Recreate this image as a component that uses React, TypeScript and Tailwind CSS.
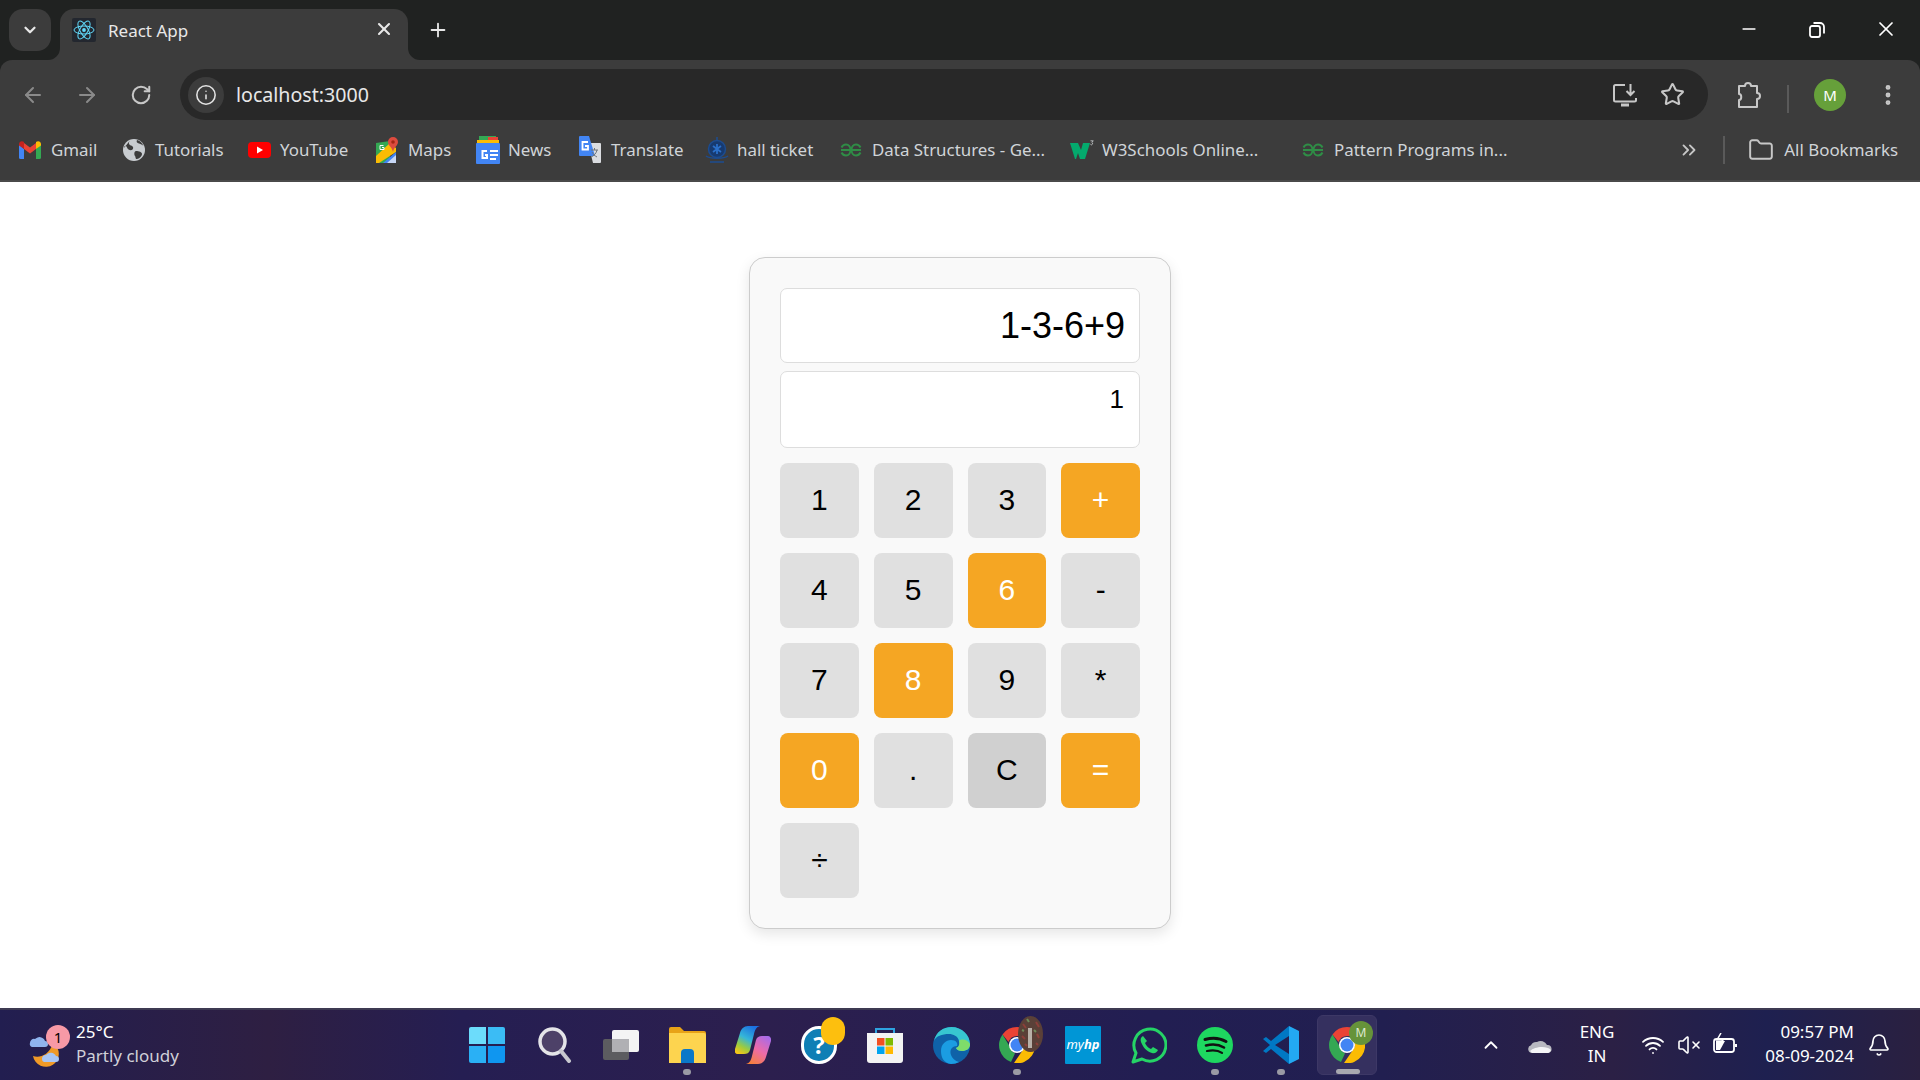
import { ArrowLeft, ArrowRight, ChevronDown, ChevronUp, ChevronsRight, Bell, EllipsisVertical, Folder, Info, Minus, Plus, RotateCw, Star, VolumeX, Wifi, X } from 'lucide-react';

const uiFont = "[font-family:'Noto_Sans',sans-serif]";

const GfgIcon = () => (
  <svg width="22" height="14" viewBox="0 0 22 14" fill="none" stroke="#2f8d46" strokeWidth="2">
    <path d="M1 7h9.500M1.500 4.500C2.500 2.500 4 1.500 6 1.500c2.800 0 4.500 2.500 4.500 5.500s-1.800 5.500-4.500 5.500c-2 0-3.500-1-4.500-3" />
    <path d="M21 7h-9.500M20.500 4.500C19.500 2.500 18 1.500 16 1.500c-2.800 0-4.500 2.500-4.500 5.500s1.800 5.500 4.500 5.500c2 0 3.500-1 4.500-3" />
  </svg>
);

const ChromeLogo = () => (
  <svg width="36" height="36" viewBox="0 0 36 36">
    <path d="M18 0a18 18 0 0 1 15.600 9H18a9 9 0 0 0-8.500 6L3.500 7.400A18 18 0 0 1 18 0z" fill="#ea4335" />
    <path d="M3.500 7.400 11 20a9 9 0 0 0 5 6.500L12 35A18 18 0 0 1 3.500 7.400z" fill="#34a853" />
    <path d="M33.600 9A18 18 0 0 1 15 36l8.500-12.500A9 9 0 0 0 24 12z" fill="#fbbc04" />
    <circle cx="18" cy="18" r="8" fill="#fff" />
    <circle cx="18" cy="18" r="6.500" fill="#4285f4" />
  </svg>
);

const bookmarks = [
  {
    label: 'Gmail',
    width: 'w-[104px]',
    icon: (
      <svg width="22" height="18" viewBox="0 0 22 18">
        <path d="M0 3v13.500A1.500 1.500 0 0 0 1.500 18H5V8z" fill="#4285f4" />
        <path d="M22 3v13.500a1.500 1.500 0 0 1-1.500 1.500H17V8z" fill="#34a853" />
        <path d="M5 8 11 12.500 17 8V2l-6 4.500L5 2z" fill="#ea4335" />
        <path d="M0 3c0-2.500 3-3.800 5-2v7L0 4.500z" fill="#c5221f" />
        <path d="M22 3c0-2.500-3-3.800-5-2v7l5-3.500z" fill="#fbbc04" />
      </svg>
    ),
  },
  {
    label: 'Tutorials',
    width: 'w-[125px]',
    icon: (
      <svg width="22" height="22" viewBox="0 0 22 22">
        <circle cx="11" cy="11" r="11" fill="#c8ccd0" />
        <path d="M7 1.500C5 4 6 6 8 6.500s3 2.500 1.500 4S5 11 4 8.500 1.500 6 1 9M13 12c3 0 6 1 6 3s-3 5-5 5-1-2-2-3-1-5 1-5zM14 1c-1 2 0 3 2 3.500s3 1 4.500 2.500C19 3.500 17 1.500 14 1z" fill="#3c3c3c" />
      </svg>
    ),
  },
  {
    label: 'YouTube',
    width: 'w-[128px]',
    icon: (
      <svg width="23" height="16" viewBox="0 0 23 16">
        <rect width="23" height="16" rx="4" fill="#ff0000" />
        <path d="M9 4.500v7l6-3.500z" fill="#fff" />
      </svg>
    ),
  },
  {
    label: 'Maps',
    width: 'w-[100px]',
    icon: (
      <svg width="22" height="26" viewBox="0 0 22 26">
        <path d="M0 6l14-2v22H0z" fill="#34a853" />
        <path d="M0 19 14 6l6 5v4L3 26H0z" fill="#fbbc04" />
        <path d="M7 26l13-11v11z" fill="#4285f4" />
        <path d="M11 26l9-8v8z" fill="#c7d7f5" />
        <path d="M17 0a5 5 0 0 1 5 5c0 3.500-4 5-5 10-1-5-5-6.500-5-10a5 5 0 0 1 5-5z" fill="#dd4b3e" />
        <circle cx="17" cy="5" r="1.800" fill="#a52714" />
        <path d="M7.500 8.500H4v4h4V10.500H6" fill="none" stroke="#fff" strokeWidth="1" />
      </svg>
    ),
  },
  {
    label: 'News',
    width: 'w-[103px]',
    icon: (
      <svg width="24" height="28" viewBox="0 0 24 28">
        <path d="M3 0h17v8H3z" fill="#34a853" />
        <path d="M12 1h10v8H12z" fill="#ea4335" />
        <path d="M1 4h22v6H1z" fill="#fbbc04" />
        <rect y="7" width="24" height="21" rx="1" fill="#4285f4" />
        <rect x="14" y="14" width="8" height="2" fill="#fff" />
        <rect x="14" y="18" width="8" height="2" fill="#fff" />
        <rect x="14" y="22" width="6" height="2" fill="#fff" />
        <path d="M11 15H6.500v7H11v-3H9" fill="none" stroke="#fff" strokeWidth="2" />
      </svg>
    ),
  },
  {
    label: 'Translate',
    width: 'w-[126px]',
    icon: (
      <svg width="22" height="28" viewBox="0 0 22 28">
        <path d="M9 7h12a1 1 0 0 1 1 1v18a1 1 0 0 1-1 1h-7z" fill="#dadce0" />
        <path d="M1 0h9l6 20H1a1 1 0 0 1-1-1V1a1 1 0 0 1 1-1z" fill="#4285f4" />
        <path d="M9 6H3.500v7.500H9V10H6" fill="none" stroke="#fff" strokeWidth="1.800" />
        <path d="M12 14h7M15.500 12v2M18 14c-.5 3-3 6-6 7M13 16c1 2 3 4 5 5" fill="none" stroke="#70757a" strokeWidth="1" />
      </svg>
    ),
  },
  {
    label: 'hall ticket',
    width: 'w-[135px]',
    icon: (
      <svg width="24" height="28" viewBox="0 0 24 28" fill="none">
        <circle cx="12" cy="13" r="8.500" stroke="#1c4c90" strokeWidth="1.500" fill="#173a70" />
        <path d="M12 1v4M1 20c4 3 18 3 22 0M5 26h14" stroke="#1c4c90" strokeWidth="1.500" />
        <path d="M8 10l8 6M16 10l-8 6M12 8v10" stroke="#2a6fc9" strokeWidth="1.800" />
      </svg>
    ),
  },
  { label: 'Data Structures - Ge...', width: 'w-[230px]', icon: <GfgIcon /> },
  {
    label: 'W3Schools Online...',
    width: 'w-[232px]',
    icon: (
      <svg width="24" height="20" viewBox="0 0 24 20">
        <path d="M0 3h8l3 7 2-7h7l-5 16h-5l-2-6-2 6H5z" fill="#04aa6d" />
        <path d="M20.500 .8h2.800l-1.500 1.600a1.200 1.200 0 1 1-1.400 1.800" fill="none" stroke="#cfd3d6" strokeWidth=".8" />
      </svg>
    ),
  },
];

const calcButtons = [
  { label: '1', kind: 'num' },
  { label: '2', kind: 'num' },
  { label: '3', kind: 'num' },
  { label: '+', kind: 'hot' },
  { label: '4', kind: 'num' },
  { label: '5', kind: 'num' },
  { label: '6', kind: 'hot' },
  { label: '-', kind: 'num' },
  { label: '7', kind: 'num' },
  { label: '8', kind: 'hot' },
  { label: '9', kind: 'num' },
  { label: '*', kind: 'num' },
  { label: '0', kind: 'hot' },
  { label: '.', kind: 'num' },
  { label: 'C', kind: 'clear' },
  { label: '=', kind: 'hot' },
  { label: '÷', kind: 'num' },
];

const kindClass: Record<string, string> = {
  num: 'bg-[#e0e0e0] text-black',
  hot: 'bg-[#f5a623] text-white',
  clear: 'bg-[#d0d0d0] text-black',
};

const TitleBar = () => (
  <div className="flex h-[60px] shrink-0 bg-[#202221] text-white">
    <div className="ml-[9px] mt-[9px] flex h-[42px] w-[42px] items-center justify-center rounded-[14px] bg-[#3c3c3c]">
      <ChevronDown size={18} strokeWidth={3} className="text-[#e8e8e8]" />
    </div>
    <div className="relative ml-[9px] mt-[9px] flex h-[51px] w-[348px] items-start rounded-t-[14px] bg-[#3c3c3c] pl-[12px] pt-[9px]">
      <svg className="absolute -left-[12px] bottom-0" width="12" height="12" viewBox="0 0 12 12">
        <path d="M12 0v12H0A12 12 0 0 0 12 0z" fill="#3c3c3c" />
      </svg>
      <svg className="absolute -right-[12px] bottom-0" width="12" height="12" viewBox="0 0 12 12">
        <path d="M0 0v12h12A12 12 0 0 1 0 0z" fill="#3c3c3c" />
      </svg>
      <div className="flex h-[24px] w-[24px] items-center justify-center rounded-[2px] bg-[#23272f]">
        <svg width="22" height="20" viewBox="-11 -10 22 20" fill="none" stroke="#61dafb" strokeWidth="1">
          <circle r="1.900" fill="#61dafb" stroke="none" />
          <ellipse rx="10" ry="4" />
          <ellipse rx="10" ry="4" transform="rotate(60)" />
          <ellipse rx="10" ry="4" transform="rotate(120)" />
        </svg>
      </div>
      <span className={`${uiFont} ml-[12px] mt-[1px] flex-1 text-[17px] leading-[24px] text-[#e8e8e8]`}>React App</span>
      <X size={20} strokeWidth={2.5} className="mr-[14px] mt-[1px] text-[#e8e8e8]" />
    </div>
    <Plus size={22} strokeWidth={2} className="ml-[19px] mt-[19px] text-[#e8e8e8]" />
    <div className="ml-auto flex items-start">
      <Minus size={20} strokeWidth={2} className="mr-[49px] mt-[19px] text-white" />
      <svg className="mr-[48px] mt-[21px]" width="18" height="18" viewBox="0 0 18 18" fill="none" stroke="#fff" strokeWidth="1.800">
        <rect x="2" y="5" width="10" height="11" rx="2" />
        <path d="M5.500 2H12a4 4 0 0 1 4 4v6.500" />
      </svg>
      <X size={24} strokeWidth={1.7} className="mr-[22px] mt-[17px] text-white" />
    </div>
  </div>
);

const Toolbar = () => (
  <div className="flex h-[60px] shrink-0 items-start rounded-t-[12px] bg-[#3c3c3c]">
    <ArrowLeft size={24} className="ml-[21px] mt-[23px] text-[#8a8a8a]" />
    <ArrowRight size={24} className="ml-[30px] mt-[23px] text-[#8a8a8a]" />
    <RotateCw size={22} strokeWidth={2.2} className="ml-[31px] mt-[24px] text-[#c7c7c7]" />
    <div className="ml-[28px] mt-[9px] flex h-[51px] w-[1528px] items-center rounded-full bg-[#282828] pl-[8px]">
      <div className="flex h-[36px] w-[36px] items-center justify-center rounded-full bg-[#3c3c3c]">
        <Info size={22} strokeWidth={1.7} className="text-[#e3e3e3]" />
      </div>
      <span className={`${uiFont} ml-[12px] flex-1 text-[19.6px] text-[#e8e8e8]`}>localhost:3000</span>
      <svg className="mr-[22px]" width="26" height="26" viewBox="0 0 26 26" fill="none" stroke="#c7c7c7" strokeWidth="2">
        <path d="M13 3H3.500a1.500 1.500 0 0 0-1.500 1.500V18a1.500 1.500 0 0 0 1.500 1.500h19A1.500 1.500 0 0 0 24 18v-2" />
        <path d="M18.500 2v11M14.500 9l4 4 4-4" />
        <path d="M9 23h8" strokeWidth="3" />
      </svg>
      <Star size={25} strokeWidth={2} className="mr-[23px] text-[#c7c7c7]" />
    </div>
    <svg className="ml-[28px] mt-[21px]" width="26" height="28" viewBox="0 0 26 28" fill="none" stroke="#c7c7c7" strokeWidth="2">
      <path d="M3 5h6c0-4 6-4 6 0h6v7c4 0 4 6 0 6v8H3v-7c3 0 3-6 0-6z" strokeLinejoin="round" />
    </svg>
    <div className="ml-[25px] mt-[25px] h-[28px] w-[2px] bg-[#5a5a5a]" />
    <div className={`${uiFont} ml-[25px] mt-[19px] flex h-[32px] w-[32px] items-center justify-center rounded-full bg-[#66a03a] text-[15px] text-white`}>M</div>
    <EllipsisVertical size={26} strokeWidth={2.5} className="ml-[29px] mt-[22px] text-[#c7c7c7]" />
  </div>
);

const BookmarksBar = () => (
  <div className={`${uiFont} flex h-[62px] shrink-0 items-center border-b-2 border-[#4a4a4a] bg-[#3c3c3c] pl-[19px] text-[16.9px] text-[#d0d4d8]`}>
    {bookmarks.map((b) => (
      <div key={b.label} className={`flex ${b.width} shrink-0 items-center`}>
        <span className="flex w-[32px] shrink-0 items-center">{b.icon}</span>
        <span className="whitespace-nowrap">{b.label}</span>
      </div>
    ))}
    <div className="flex shrink-0 items-center">
      <span className="flex w-[32px] shrink-0 items-center">
        <GfgIcon />
      </span>
      <span className="whitespace-nowrap">Pattern Programs in...</span>
    </div>
    <ChevronsRight size={22} strokeWidth={2} className="ml-auto text-[#c7c7c7]" />
    <div className="ml-[23px] h-[28px] w-[2px] bg-[#5a5a5a]" />
    <Folder size={26} strokeWidth={1.8} className="ml-[23px] text-[#c7c7c7]" />
    <span className="ml-[10px] mr-[22px] whitespace-nowrap">All Bookmarks</span>
  </div>
);

const Calculator = () => (
  <div className="w-[422px] rounded-[16px] border border-[#cccccc] bg-[#f9f9f9] p-[30px] shadow-[0_5px_14px_rgba(0,0,0,0.1)] [font-family:'Liberation_Sans',Arial,sans-serif]">
    <div className="flex h-[75px] items-center justify-end rounded-[7px] border border-[#dddddd] bg-white pr-[14px] text-[36px] text-black">
      1-3-6+9
    </div>
    <div className="mt-[8px] flex h-[77px] items-start justify-end rounded-[7px] border border-[#dddddd] bg-white pr-[15px] pt-[8px] text-[26px] text-black">
      1
    </div>
    <div className="mt-[15px] grid grid-cols-4 gap-[15px]">
      {calcButtons.map((b) => (
        <button key={b.label} className={`flex h-[75px] items-center justify-center rounded-[8px] pb-[2px] text-[30px] ${kindClass[b.kind]}`}>
          {b.label}
        </button>
      ))}
    </div>
  </div>
);

const taskIcons = [
  {
    id: 'files',
    dot: true,
    icon: (
      <svg width="37" height="36" viewBox="0 0 37 36">
        <path d="M0 2a2 2 0 0 1 2-2h9l4 4h20a2 2 0 0 1 2 2v4H0z" fill="#e8a317" />
        <path d="M0 6h35a2 2 0 0 1 2 2v28H0z" fill="#fdd44f" />
        <path d="M12 26a4 4 0 0 1 4-4h5a4 4 0 0 1 4 4v10H12z" fill="#0a78c8" />
      </svg>
    ),
  },
  {
    id: 'copilot',
    icon: (
      <svg width="36" height="38" viewBox="0 0 36 38">
        <defs>
          <linearGradient id="cpa" x1="0.7" y1="0" x2="0.2" y2="1">
            <stop offset="0" stopColor="#1b6fe2" />
            <stop offset=".45" stopColor="#35b6d8" />
            <stop offset=".75" stopColor="#9ccb3f" />
            <stop offset="1" stopColor="#f5c518" />
          </linearGradient>
          <linearGradient id="cpb" x1="0.8" y1="0" x2="0.2" y2="1">
            <stop offset="0" stopColor="#a86be8" />
            <stop offset=".5" stopColor="#ee6ba8" />
            <stop offset="1" stopColor="#f5803a" />
          </linearGradient>
        </defs>
        <path d="M13 0h12c-4 1-5 4-6 8l-4 16c-1 3-3 4-6 4H3c-3 0-3.500-2-3-5L5 7c1-4 4-7 8-7z" fill="url(#cpa)" />
        <path d="M23 38H11c4-1 5-4 6-8l4-16c1-3 3-4 6-4h6c2 0 3.500 2 3 5l-5 16c-1 4-4 7-8 7z" fill="url(#cpb)" />
      </svg>
    ),
  },
  {
    id: 'help',
    icon: (
      <div className="relative h-[38px] w-[36px]">
        <div className="flex h-[38px] w-[36px] items-center justify-center rounded-full border-[3px] border-white bg-[#0f7fb5] text-[24px] font-bold text-white">?</div>
        <div className="absolute -right-[8px] -top-[9px] h-[28px] w-[24px] rounded-full bg-[#fdbf0e]" />
      </div>
    ),
  },
  {
    id: 'store',
    icon: (
      <svg width="36" height="36" viewBox="0 0 36 36">
        <path d="M9 6V2h18v4" fill="none" stroke="#2ea3e0" strokeWidth="2" />
        <path d="M0 6h36v27a3 3 0 0 1-3 3H3a3 3 0 0 1-3-3z" fill="#f3f3f3" />
        <rect x="10" y="11" width="7.500" height="7.500" fill="#f25022" />
        <rect x="18.500" y="11" width="7.500" height="7.500" fill="#7fba00" />
        <rect x="10" y="19.500" width="7.500" height="7.500" fill="#00a4ef" />
        <rect x="18.500" y="19.500" width="7.500" height="7.500" fill="#ffb900" />
      </svg>
    ),
  },
  {
    id: 'edge',
    icon: (
      <svg width="37" height="37" viewBox="0 0 37 37">
        <circle cx="18.500" cy="18.500" r="18.500" fill="#0f62a8" />
        <path d="M1 14C3 5 10 0 18.500 0 29 0 37 8 37 17c0 5-4 7-8 7-3 0-5-1-6-3 3-1 4-4 3-7-1-5-6-7-10-7C9 7 3 9 1 14z" fill="#37c6d0" />
        <path d="M37 17c0 5-4 7-8 7-3 0-5-1-6-3 3-1 4-4 3-7 3-3 9-1 11 3z" fill="#7fdc6a" />
        <path d="M8 24c0-7 5-11 10-11s7 3 6 6c-4 0-8 3-6 9 1 3 4 6 8 7-2 1-5 2-8 2C11 36 8 31 8 24z" fill="#1b9de2" />
      </svg>
    ),
  },
  {
    id: 'chrome',
    dot: true,
    icon: (
      <div className="relative h-[36px] w-[36px]">
        <ChromeLogo />
        <svg className="absolute -right-[8px] -top-[11px]" width="25" height="36" viewBox="0 0 25 36">
          <ellipse cx="12.500" cy="18" rx="12.500" ry="18" fill="#5a4038" />
          <path d="M12 12v20" stroke="#b8b0a8" strokeWidth="4" />
          <path d="M5 8l3 4M18 6l3 5M4 20l3 3M19 18l2 4M7 28l2 2M18 27l2 2" stroke="#8c3f3a" strokeWidth="2" />
          <path d="M9 3l2 3M16 14l2 2M4 14l2 1" stroke="#6f8a5a" strokeWidth="2" />
        </svg>
      </div>
    ),
  },
  {
    id: 'myhp',
    icon: (
      <div className={`${uiFont} flex h-[38px] w-[36px] items-center justify-center rounded-[1px] bg-[#0096d6] text-[13px] italic text-white`}>
        my<span className="font-bold">hp</span>
      </div>
    ),
  },
  {
    id: 'whatsapp',
    icon: (
      <svg width="36" height="38" viewBox="0 0 36 38" fill="none">
        <path d="M2 36l3-9a16 16 0 1 1 6 6z" stroke="#25d366" strokeWidth="3" strokeLinejoin="round" />
        <path d="M12 10c-2 1-3 3-2 6 2 5 5 9 11 11 3 1 5-1 6-3l-5-3-2 2c-3-1-5-4-6-6l2-2z" fill="#25d366" />
      </svg>
    ),
  },
  {
    id: 'spotify',
    dot: true,
    icon: (
      <svg width="36" height="36" viewBox="0 0 36 36" fill="none">
        <circle cx="18" cy="18" r="18" fill="#1ed760" />
        <path d="M8 12.500c7-2 15-1.500 21 2" stroke="#111" strokeWidth="3" strokeLinecap="round" />
        <path d="M9 18.500c6-1.500 13-1 18 2" stroke="#111" strokeWidth="2.600" strokeLinecap="round" />
        <path d="M10 24c5-1 11-.8 15 1.800" stroke="#111" strokeWidth="2.200" strokeLinecap="round" />
      </svg>
    ),
  },
  {
    id: 'vscode',
    dot: true,
    icon: (
      <svg width="36" height="38" viewBox="0 0 36 38">
        <path d="M26 0 36 5v28l-10 5z" fill="#23a9f2" />
        <path d="M26 0v10L12 19l14 9v10L8 23l-5 4-3-2 7-6-7-6 3-2 5 4z" fill="#0078c4" />
      </svg>
    ),
  },
];

const Taskbar = () => (
  <div className={`${uiFont} flex h-[72px] shrink-0 items-center border-t-2 border-[#3e3a52] bg-[linear-gradient(90deg,#221e50_0%,#2e1f42_14%,#251e52_24%,#2c1f4e_40%,#221e52_60%,#211f50_72%,#2b2045_84%,#1e2050_92%,#2a2040_100%)] text-white`}>
    {/* Weather */}
    <div className="flex w-[454px] shrink-0 items-center pl-[29px]">
      <div className="relative h-[40px] w-[47px] shrink-0">
        <svg className="absolute left-0 top-[8px]" width="38" height="34" viewBox="0 0 38 34">
          <path d="M24 10a13 13 0 1 1-20 13c6 2 16 0 20-13z" fill="#f09a28" />
          <path d="M1 10a4 4 0 0 1 5-4 6 6 0 0 1 10 2 3 3 0 0 1 0 6H3a3 3 0 0 1-2-4z" fill="#8fb4ee" />
          <path d="M13 26a4 4 0 0 1 4-4 6 6 0 0 1 10 1 3 3 0 0 1 0 6H15a3 3 0 0 1-2-3z" fill="#a9c6f5" />
        </svg>
        <div className="absolute left-[17px] top-0 flex h-[24px] w-[24px] items-center justify-center rounded-full bg-[#f799a6] text-[15px] text-black">1</div>
      </div>
      <div className="-mt-[2px] text-[17px] leading-[24px]">
        <div>25°C</div>
        <div className="text-[#d0d0d8]">Partly cloudy</div>
      </div>
    </div>

    {/* Pinned apps */}
    <div className="flex shrink-0 items-center">
      <div className="flex h-[60px] w-[66px] items-center justify-center">
        <svg width="36" height="36" viewBox="0 0 36 36">
          <path d="M0 2a2 2 0 0 1 2-2h15v17H0z" fill="#6cdcfb" />
          <path d="M19 0h15a2 2 0 0 1 2 2v15H19z" fill="#3bbcf5" />
          <path d="M0 19h17v17H2a2 2 0 0 1-2-2z" fill="#2ab0f5" />
          <path d="M19 19h17v15a2 2 0 0 1-2 2H19z" fill="#0f96f0" />
        </svg>
      </div>
      <div className="flex h-[60px] w-[68px] items-center justify-center pl-[2px]">
        <svg width="34" height="36" viewBox="0 0 34 36" fill="none">
          <circle cx="14.500" cy="14.500" r="12.500" fill="#4d4168" stroke="#e4e4e8" strokeWidth="3.500" />
          <path d="M23 24l8 10" stroke="#c8c8d0" strokeWidth="4" strokeLinecap="round" />
        </svg>
      </div>
      <div className="flex h-[60px] w-[66px] items-center justify-center">
        <svg width="36" height="30" viewBox="0 0 36 30">
          <rect y="9" width="26" height="21" rx="2" fill="#5c5c60" />
          <rect x="9" width="27" height="22" rx="2" fill="#f4f4f4" />
          <rect x="9" y="9" width="17" height="13" fill="#b0b0b4" />
        </svg>
      </div>
      {taskIcons.map((t) => (
        <div key={t.id} className="relative flex h-[60px] w-[66px] items-center justify-center">
          {t.icon}
          {t.dot && <div className="absolute bottom-0 left-[29px] h-[6px] w-[8px] rounded-full bg-[#9a9aa4]" />}
        </div>
      ))}
      <div className="relative ml-[3px] flex h-[60px] w-[60px] items-center justify-center rounded-[6px] border border-[#3d3866] bg-[#35305f]">
        <ChromeLogo />
        <div className="absolute right-[3px] top-[5px] flex h-[24px] w-[24px] items-center justify-center rounded-full bg-[#66933a] text-[12px] text-[#dde8d0]">M</div>
        <div className="absolute bottom-0 left-[18px] h-[5px] w-[24px] rounded-full bg-[#a8a8b0]" />
      </div>
    </div>

    {/* Tray */}
    <div className="flex flex-1 items-center pl-[103px]">
      <ChevronUp size={22} strokeWidth={2} className="text-white" />
      <svg className="ml-[26px]" width="24" height="16" viewBox="0 0 24 16">
        <path d="M4 16a4 4 0 0 1-1-7.800 6 6 0 0 1 6-3.200 7 7 0 0 1 10 3 4 4 0 0 1 1 8z" fill="#b8b8c0" />
        <path d="M2 14c4-4 16-6 21-1-1 2-2 3-3 3H4z" fill="#f4f4f6" />
      </svg>
      <div className="-mt-[2px] ml-[27px] w-[36px] text-center text-[17px] leading-[24px]">
        <div>ENG</div>
        <div>IN</div>
      </div>
      <Wifi size={24} strokeWidth={1.8} className="ml-[26px]" />
      <VolumeX size={24} strokeWidth={1.6} className="ml-[12px]" />
      <svg className="ml-[12px]" width="25" height="24" viewBox="0 0 25 24" fill="none" stroke="#fff" strokeWidth="1.800">
        <rect x="1" y="6" width="20" height="13" rx="2.500" />
        <path d="M23 11v3" strokeWidth="2" />
        <path d="M3 8h9l-5 9H3z" fill="#fff" stroke="none" />
        <path d="M8 0 4 7h6l-3 5" strokeWidth="1.500" />
      </svg>
      <div className="-mt-[2px] ml-auto text-right text-[17px] leading-[24px]">
        <div>09:57 PM</div>
        <div>08-09-2024</div>
      </div>
      <Bell size={24} strokeWidth={1.7} className="ml-[13px] mr-[29px]" />
    </div>
  </div>
);

export default function App() {
  return (
    <div className="flex h-screen flex-col overflow-hidden bg-white">
      <div className="bg-[#202221]">
        <TitleBar />
        <Toolbar />
      </div>
      <BookmarksBar />
      <main className="flex flex-1 items-start justify-center pt-[75px]">
        <Calculator />
      </main>
      <Taskbar />
    </div>
  );
}
